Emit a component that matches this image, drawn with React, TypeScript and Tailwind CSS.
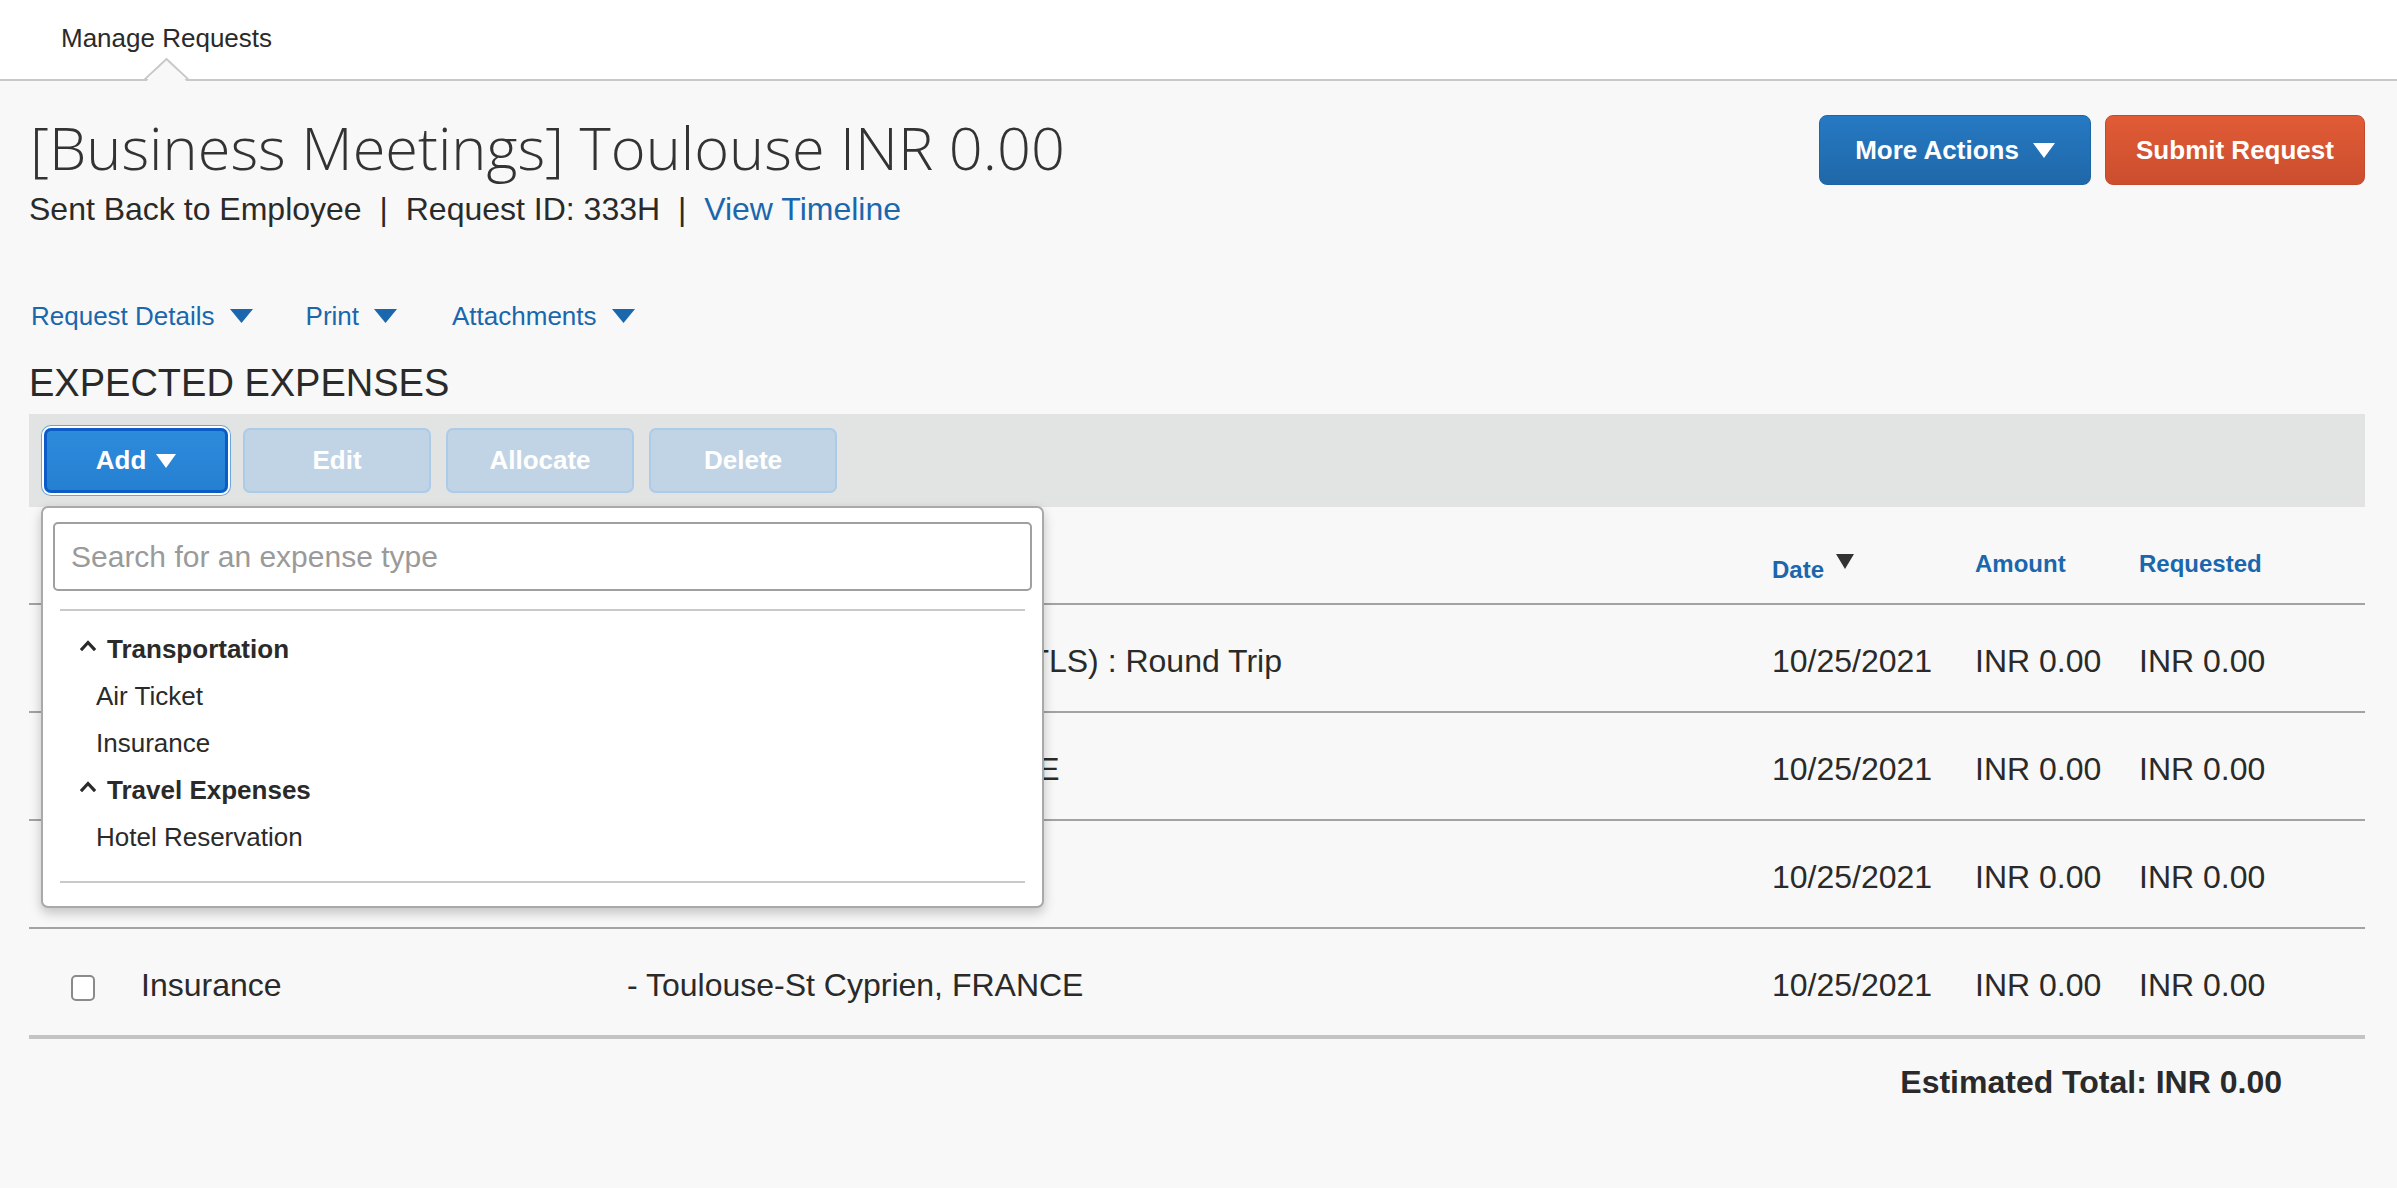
import React from "react";

const Tri = ({ w = 22, h = 14, color = "#fff", className = "" }: { w?: number; h?: number; color?: string; className?: string }) => (
  <svg width={w} height={h} viewBox={`0 0 ${w} ${h}`} className={className}>
    <polygon points={`0,0 ${w},0 ${w / 2},${h}`} fill={color} />
  </svg>
);

const rows = [
  { label: "Air Ticket", desc: "Mumbai (BOM) - Toulouse (TLS) : Round Trip", shift: "ml-[10px]" },
  { label: "Hotel Reservation", desc: "- Toulouse-Blagnac, FRANCE", shift: "ml-[10px]" },
  { label: "Air Ticket", desc: "- Toulouse, FRANCE", shift: "" },
  { label: "Insurance", desc: "- Toulouse-St Cyprien, FRANCE", shift: "" },
];

const Caret = () => (
  <svg width="16" height="11" viewBox="0 0 16 11" className="mr-[11px] mt-[-8px]">
    <polyline points="2,9 8,2.5 14,9" fill="none" stroke="#2a2a2a" strokeWidth="3.2" strokeLinecap="square" />
  </svg>
);

export default function App() {
  return (
    <div className="min-h-[1188px] bg-[#f8f8f8] font-['Liberation_Sans',Arial,sans-serif] text-[#333]">
      <header className="relative h-[81px] border-b-2 border-[#c8c8c8] bg-white">
        <div className="pl-[61px] pt-[22px] text-[26px] leading-[32px] text-[#2a2a2a]">Manage Requests</div>
        <svg className="absolute left-[144px] top-[58px]" width="45" height="26" viewBox="0 0 45 26">
          <polygon points="0,26 22.5,1 45,26" fill="#f8f8f8" />
          <polyline points="0,22 22.5,1 45,22" fill="none" stroke="#c8c8c8" strokeWidth="2" />
        </svg>
      </header>

      <main className="pl-[29px] pr-[32px]">
        <div className="flex items-start justify-between">
          <div>
            <h1 className="ml-[1px] mt-[31px] font-['Open_Sans',sans-serif] text-[59.5px] font-light leading-[70px] text-[#333]">
              [Business Meetings] Toulouse INR 0.00
            </h1>
            <div className="mt-[7px] text-[32px] leading-[40px] text-[#2a2a2a]">
              Sent Back to Employee <span className="mx-[9px]">|</span> Request ID: 333H{" "}
              <span className="mx-[9px]">|</span> <span className="text-[#1a67ad]">View Timeline</span>
            </div>
          </div>
          <div className="mt-[34px] flex gap-[14px]">
            <button className="flex h-[70px] w-[272px] items-center justify-center gap-[14px] rounded-[8px] border border-[#1d66a6] bg-gradient-to-b from-[#2679c3] to-[#1f68a9] text-[26px] font-bold text-white">
              More Actions
              <Tri w={22} h={15} />
            </button>
            <button className="flex h-[70px] w-[260px] items-center justify-center rounded-[8px] border border-[#c54a2b] bg-gradient-to-b from-[#e15b36] to-[#cb4e2e] text-[26px] font-bold text-white">
              Submit Request
            </button>
          </div>
        </div>

        <div className="ml-[2px] mt-[71px] flex items-center text-[26px] leading-[32px] text-[#1a67ad]">
          <span>Request Details</span>
          <Tri w={23} h={14} color="#1a67ad" className="ml-[15px]" />
          <span className="ml-[53px]">Print</span>
          <Tri w={23} h={14} color="#1a67ad" className="ml-[15px]" />
          <span className="ml-[55px]">Attachments</span>
          <Tri w={23} h={14} color="#1a67ad" className="ml-[15px]" />
        </div>

        <h2 className="mt-[29px] text-[38px] leading-[44px] text-[#2a2a2a]">EXPECTED EXPENSES</h2>

        <div className="relative mt-[9px]">
          <div className="flex h-[93px] items-start gap-[14px] bg-[#e2e3e3] pl-[15px] pt-[14px]">
            <button className="flex h-[65px] w-[184px] items-center justify-center gap-[10px] rounded-[7px] border-[3px] border-[#0b5cc6] bg-gradient-to-b from-[#2d8bdc] to-[#2680d2] text-[26px] font-bold text-white shadow-[0_0_0_2px_#fff,0_0_0_3px_#6aa6de]">
              Add
              <Tri w={20} h={14} />
            </button>
            {["Edit", "Allocate", "Delete"].map((t) => (
              <button
                key={t}
                className="ml-[1px] flex h-[65px] w-[188px] items-center justify-center rounded-[7px] border-2 border-[#abcbe8] bg-[#c1d4e5] text-[26px] font-bold text-white"
              >
                {t}
              </button>
            ))}
          </div>

          <div className="grid h-[98px] grid-cols-[112px_486px_1145px_203px_164px_1fr] border-b-2 border-[#a3a3a3] text-[24px] font-bold leading-[30px] text-[#1a67ad]">
            <div />
            <div />
            <div />
            <div className="flex items-start pt-[48px]">
              <span>Date</span>
              <Tri w={18} h={15} color="#333" className="ml-[12px] mt-[-1px]" />
            </div>
            <div className="pt-[42px]">Amount</div>
            <div className="pt-[42px]">Requested</div>
          </div>

          {rows.map((r, i) => (
            <div
              key={i}
              className={`grid grid-cols-[112px_486px_1145px_203px_164px_1fr] items-center pt-[6px] text-[32px] leading-[40px] text-[#2a2a2a] ${
                i === rows.length - 1 ? "h-[110px] border-b-4 border-[#c4c4c4]" : "h-[108px] border-b-2 border-[#a3a3a3]"
              }`}
            >
              <div className="pl-[42px] pt-[6px]">
                <div className="h-[26px] w-[24px] rounded-[5px] border-2 border-[#8a8a8a] bg-white" />
              </div>
              <div>{r.label}</div>
              <div className={`whitespace-nowrap ${r.shift}`}>{r.desc}</div>
              <div>10/25/2021</div>
              <div>INR 0.00</div>
              <div>INR 0.00</div>
            </div>
          ))}

          <div className="mt-[23px] pr-[83px] text-right text-[32px] font-bold leading-[40px] text-[#2a2a2a]">
            Estimated Total: INR 0.00
          </div>

          <div className="absolute left-[12px] top-[92px] h-[402px] w-[1003px] rounded-[7px] border-2 border-[#a9a9a9] bg-white shadow-[0_5px_12px_rgba(0,0,0,0.22)]">
            <div className="mx-[10px] mt-[14px] flex h-[69px] items-center rounded-[5px] border-2 border-[#a0a0a0] pl-[16px] text-[30px] text-[#9a9a9a]">
              Search for an expense type
            </div>
            <div className="mx-[17px] mt-[18px] h-[2px] bg-[#c9c9c9]" />
            <div className="pt-[15px] text-[26px] leading-[47px]">
              <div className="flex items-center pl-[37px] font-bold text-[#2a2a2a]">
                <Caret />
                Transportation
              </div>
              <div className="pl-[53px] text-[#2a2a2a]">Air Ticket</div>
              <div className="pl-[53px] text-[#2a2a2a]">Insurance</div>
              <div className="flex items-center pl-[37px] font-bold text-[#2a2a2a]">
                <Caret />
                Travel Expenses
              </div>
              <div className="pl-[53px] text-[#2a2a2a]">Hotel Reservation</div>
            </div>
            <div className="mx-[17px] mt-[20px] h-[2px] bg-[#c9c9c9]" />
          </div>
        </div>
      </main>
    </div>
  );
}
